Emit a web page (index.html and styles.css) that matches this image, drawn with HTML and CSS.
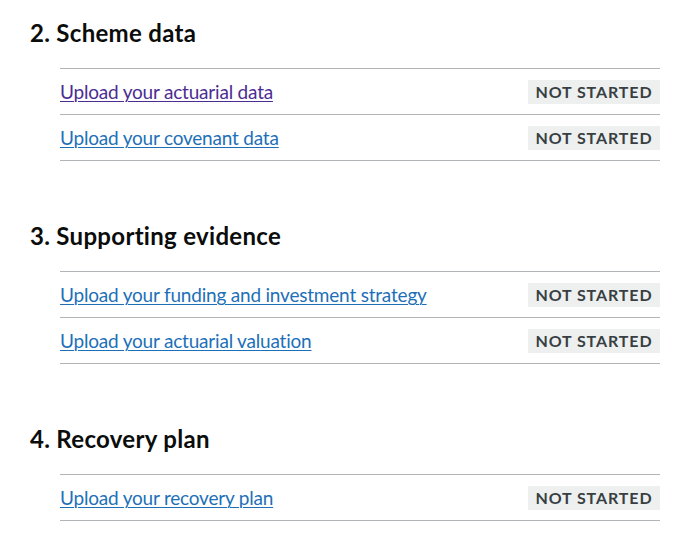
FILE: index.html
```html
<!DOCTYPE html>
<html lang="en">
<head>
<meta charset="utf-8">
<title>Task list</title>
<link rel="stylesheet" href="styles.css">
</head>
<body>
<main class="page">
  <section class="section">
    <h2 class="section-title">2. Scheme data</h2>
    <ul class="items">
      <li class="item"><a class="link link--visited" href="#">Upload your actuarial data</a><strong class="tag">Not started</strong></li>
      <li class="item"><a class="link" href="#">Upload your covenant data</a><strong class="tag">Not started</strong></li>
    </ul>
  </section>
  <section class="section">
    <h2 class="section-title">3. Supporting evidence</h2>
    <ul class="items">
      <li class="item"><a class="link" href="#">Upload your funding and investment strategy</a><strong class="tag">Not started</strong></li>
      <li class="item"><a class="link" href="#">Upload your actuarial valuation</a><strong class="tag">Not started</strong></li>
    </ul>
  </section>
  <section class="section">
    <h2 class="section-title">4. Recovery plan</h2>
    <ul class="items">
      <li class="item"><a class="link" href="#">Upload your recovery plan</a><strong class="tag">Not started</strong></li>
    </ul>
  </section>
</main>
</body>
</html>
```
FILE: styles.css
```css
* { box-sizing: border-box; }
html, body { margin: 0; padding: 0; background: #fff; }
body {
  font-family: Lato, "Liberation Sans", sans-serif;
  color: #0b0c0c;
}
.page {
  padding: 18px 29px 0 30px;
}
.section {
  margin-bottom: 60px;
}
.section-title {
  margin: 0 0 20px;
  font-size: 24px;
  line-height: 30px;
  font-weight: 700;
  letter-spacing: 0.3px;
}
.items {
  list-style: none;
  margin: 0;
  padding: 0 0 0 30px;
}
.item {
  display: flex;
  justify-content: space-between;
  align-items: center;
  padding: 10px 0;
  border-bottom: 1px solid #b1b4b6;
  font-size: 19px;
  line-height: 25px;
}
.item:first-child {
  border-top: 1px solid #b1b4b6;
}
.link {
  color: #1d70b8;
  letter-spacing: -0.2px;
  text-decoration: underline;
  text-underline-offset: 2px;
  text-decoration-thickness: 1px;
}
.link--visited { color: #4c2c92; }
.tag {
  display: inline-block;
  width: 132px;
  text-align: center;
  padding: 1px 0 2px;
  background: #eeefef;
  color: #383f43;
  font-size: 16px;
  line-height: 21px;
  font-weight: 700;
  text-transform: uppercase;
  letter-spacing: 0.9px;
}
```
